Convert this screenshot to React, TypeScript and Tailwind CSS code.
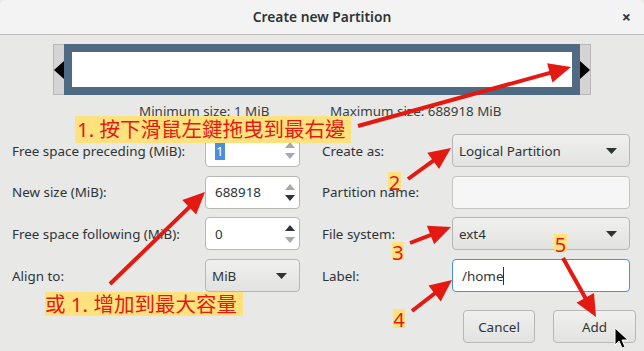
import React from 'react';

const RED = '#e41a12';

function arrowParts(x1: number, y1: number, x2: number, y2: number, len = 22, half = 10) {
  const dx = x2 - x1;
  const dy = y2 - y1;
  const d = Math.hypot(dx, dy);
  const ux = dx / d;
  const uy = dy / d;
  const bx = x2 - ux * len;
  const by = y2 - uy * len;
  const px = -uy;
  const py = ux;
  const head = `${x2},${y2} ${bx + px * half},${by + py * half} ${bx - px * half},${by - py * half}`;
  return { line: { x1, y1, x2: bx + ux * 2, y2: by + uy * 2 }, head };
}

const arrows: [number, number, number, number][] = [
  [358, 126, 571, 67],
  [110, 284, 205, 192],
  [408, 179, 451, 148],
  [410, 243, 451, 227],
  [412, 311, 452, 280],
  [563, 258, 596, 317],
];

function Tri({ dir, color }: { dir: 'up' | 'down'; color: string }) {
  return (
    <svg width="10" height="6" viewBox="0 0 10 6">
      {dir === 'up' ? <polygon points="0,6 10,6 5,0" fill={color} /> : <polygon points="0,0 10,0 5,6" fill={color} />}
    </svg>
  );
}

function Spin({ value, up, down, selected }: { value: string; up: boolean; down: boolean; selected?: boolean }) {
  return (
    <div className="h-[33px] bg-white border border-[#b7b7b4] rounded-[4px] flex items-center pl-[9px]">
      <div className="flex-1 text-[#2e3436]">
        {selected ? <span className="bg-[#4a90d9] text-white px-[1px]">{value}</span> : value}
      </div>
      <div className="w-[16px] h-full flex flex-col items-center justify-around py-[4px] mr-[1px]">
        <Tri dir="up" color={up ? '#2e3436' : '#a8a8a8'} />
        <Tri dir="down" color={down ? '#2e3436' : '#a8a8a8'} />
      </div>
    </div>
  );
}

function Combo({ value }: { value: string }) {
  return (
    <div className="h-[33px] bg-gradient-to-b from-[#f0f0ef] to-[#e2e2e0] border border-[#b7b7b4] rounded-[4px] flex items-center justify-between pl-[6px] pr-[12px] text-[#2e3436]">
      <span>{value}</span>
      <svg width="11" height="6" viewBox="0 0 11 6">
        <polygon points="0,0 11,0 5.5,6" fill="#2e3436" />
      </svg>
    </div>
  );
}

function Entry({ value, focused }: { value?: string; focused?: boolean }) {
  return (
    <div
      className={
        'h-[33px] rounded-[4px] flex items-center pl-[9px] text-[#2e3436] ' +
        (focused ? 'bg-white border border-[#4a90d9]' : 'border border-[#c4c4c1] bg-[#f6f6f6]')
      }
    >
      {value}
      {focused && <span className="w-[1px] h-[18px] bg-[#2e3436]" />}
    </div>
  );
}

function Tag({ text, className }: { text: string; className: string }) {
  return (
    <div
      className={
        'absolute whitespace-nowrap bg-[#ffe27e] text-[#e41a12] font-["Noto_Sans","Noto_Sans_CJK_TC",sans-serif] leading-none ' +
        className
      }
    >
      {text}
    </div>
  );
}

export default function App() {
  return (
    <div className="relative w-[644px] h-[351px] overflow-hidden bg-[#e8e8e7] text-[13.4px] text-[#2e3436] font-['Noto_Sans',sans-serif]">
      {/* header */}
      <div className="h-[35px] bg-[#f3f3f3] border-b border-[#bcbcbc] rounded-t-[6px] grid grid-cols-[1fr_auto_1fr] items-center">
        <div />
        <div className="font-semibold text-[13.8px] text-[#2e3436]">Create new Partition</div>
        <div className="flex justify-end pr-[13px] text-[16px] font-bold text-[#2e3436]">×</div>
      </div>

      {/* partition bar */}
      <div className="ml-[53px] mt-[9px] w-[538px] h-[51px] flex bg-[#d4d4d4] border border-[#b9b9b9]">
        <div className="w-[10px] flex items-center">
          <svg width="10" height="18" viewBox="0 0 10 18">
            <polygon points="10,0 10,18 0,9" fill="#000" />
          </svg>
        </div>
        <div className="flex-1 bg-[#4f6a83] px-[8px] py-[8px] -my-[1px]">
          <div className="w-full h-full bg-white" />
        </div>
        <div className="w-[10px] flex items-center">
          <svg width="10" height="18" viewBox="0 0 10 18">
            <polygon points="0,0 0,18 10,9" fill="#000" />
          </svg>
        </div>
      </div>

      <div className="flex mt-[6px] pl-[139px] text-[#3a3f40]">
        <span className="w-[191px]">Minimum size: 1 MiB</span>
        <span>Maximum size: 688918 MiB</span>
      </div>

      {/* form */}
      <div className="mt-[13px] pl-[12px] grid grid-cols-[193px_95px_22px_130px_178px] auto-rows-[33px] gap-y-[8.7px] items-center">
        <span>Free space preceding (MiB):</span>
        <Spin value="1" up={false} down={false} selected />
        <div />
        <span>Create as:</span>
        <Combo value="Logical Partition" />

        <span>New size (MiB):</span>
        <Spin value="688918" up={false} down={true} />
        <div />
        <span>Partition name:</span>
        <Entry />

        <span>Free space following (MiB):</span>
        <Spin value="0" up={true} down={false} />
        <div />
        <span>File system:</span>
        <Combo value="ext4" />

        <span>Align to:</span>
        <Combo value="MiB" />
        <div />
        <span>Label:</span>
        <Entry value="/home" focused />
      </div>

      <div className="flex justify-end gap-[18px] pr-[8px] mt-[18px]">
        <div className="w-[72px] h-[33px] flex items-center justify-center rounded-[4px] border border-[#b7b7b4] bg-gradient-to-b from-[#f0f0ef] to-[#e2e2e0]">
          Cancel
        </div>
        <div className="w-[83px] h-[33px] flex items-center justify-center rounded-[4px] border border-[#b7b7b4] bg-gradient-to-b from-[#f0f0ef] to-[#e2e2e0]">
          Add
        </div>
      </div>

      {/* annotations */}
      <Tag text="1. 按下滑鼠左鍵拖曳到最右邊" className="left-[75px] top-[116px] w-[276px] h-[27px] pl-[2px] pt-[3px] text-[20.5px]" />
      <Tag text="或 1. 增加到最大容量" className="left-[45px] top-[292px] w-[198px] h-[24px] pt-[2px] text-[20.5px]" />
      <Tag text="2" className="left-[388px] top-[172px] w-[13px] h-[18px] pt-[1px] text-[20px] text-center" />
      <Tag text="3" className="left-[392px] top-[242px] w-[12px] h-[18px] pt-[1px] text-[20px] text-center" />
      <Tag text="4" className="left-[393px] top-[309px] w-[12px] h-[19px] pt-[1px] text-[20px] text-center" />
      <Tag text="5" className="left-[554px] top-[234px] w-[13px] h-[18px] pt-[1px] text-[20px] text-center" />

      <svg className="absolute left-0 top-0" width="644" height="351" viewBox="0 0 644 351">
        {arrows.map((a, i) => {
          const p = arrowParts(a[0], a[1], a[2], a[3]);
          return (
            <g key={i}>
              <line {...p.line} stroke={RED} strokeWidth="4" />
              <polygon points={p.head} fill={RED} />
            </g>
          );
        })}
        {/* mouse pointer */}
        <polygon
          points="615,328 615,345 619,341 622,348 625,347 622,340 628,340"
          fill="#000"
          stroke="#fff"
          strokeWidth="1"
        />
      </svg>
    </div>
  );
}
